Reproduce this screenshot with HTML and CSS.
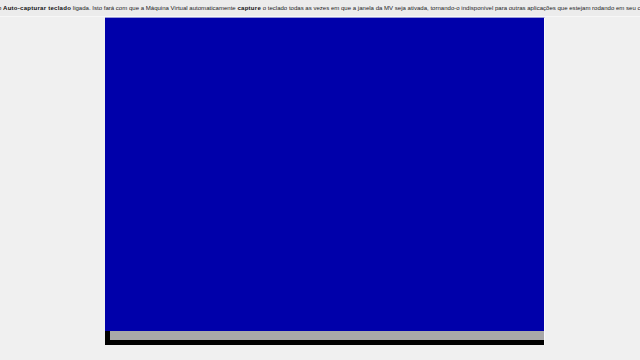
FILE: index.html
```html
<!DOCTYPE html>
<html lang="pt">
<head>
<meta charset="utf-8">
<link rel="stylesheet" href="styles.css">
</head>
<body>
<div class="notice"><span class="msg">o <b>Auto-capturar teclado</b> ligada. Isto fará com que a Máquina Virtual automaticamente <b>capture</b> o teclado todas as vezes em que a janela da MV seja ativada, tornando-o indisponível para outras aplicações que estejam rodando em seu computador.</span></div>
<div class="stage">
  <div class="vm">
    <div class="screen"></div>
    <div class="bottom">
      <div class="edge"></div>
      <div class="bars">
        <div class="graybar"></div>
        <div class="blackbar"></div>
      </div>
    </div>
  </div>
</div>
</body>
</html>
```
FILE: styles.css
```css
html, body {
  margin: 0;
  padding: 0;
  background: #f0f0f0;
  width: 640px;
  height: 360px;
  overflow: hidden;
}
.notice {
  height: 16px;
  background: #ececec;
  border-bottom: 1px solid #f7f7f7;
  white-space: nowrap;
  overflow: hidden;
  font-family: "Liberation Sans", Arial, sans-serif;
  font-size: 6.05px;
  line-height: 16px;
  color: #1e1e1e;
}
.msg {
  display: inline-block;
  margin-left: -2px;
}
.msg b {
  color: #111;
  letter-spacing: 0.25px;
}
.stage {
  padding-left: 105px;
}
.vm {
  width: 439px;
  border-right: 1px solid #fafafa;
  border-top: 1px solid #9a9ad8;
}
.screen {
  height: 313px;
  background: #0000aa;
}
.bottom {
  display: flex;
}
.edge {
  width: 5px;
  background: #000;
}
.bars {
  flex: 1;
}
.graybar {
  height: 9px;
  background: #a8a8a8;
}
.blackbar {
  height: 5px;
  background: #000;
}
```
